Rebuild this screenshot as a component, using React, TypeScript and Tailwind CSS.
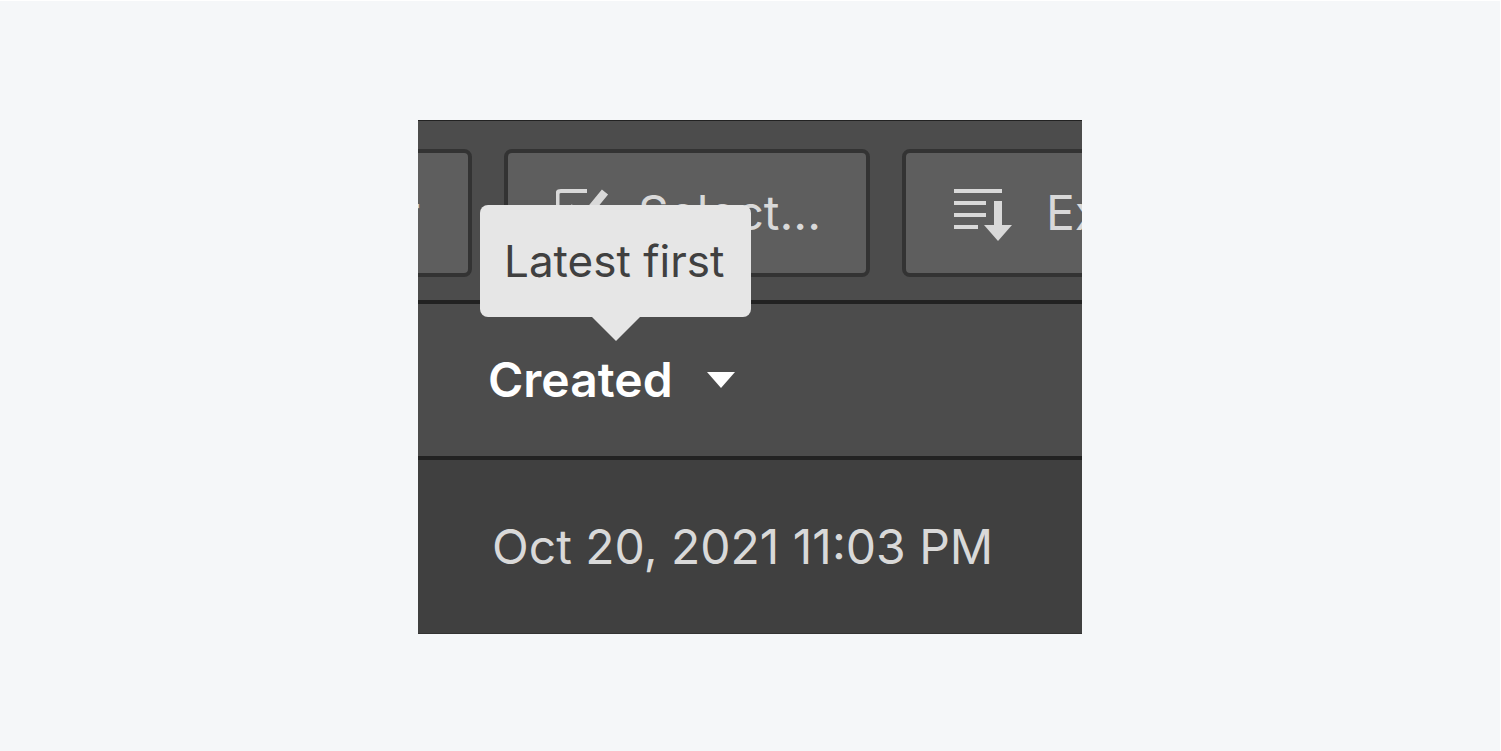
import type { ReactNode } from "react";

function ToolbarButton({ children, className }: { children: ReactNode; className: string }) {
  return (
    <button
      type="button"
      className={`flex h-32 shrink-0 items-center rounded-lg border-4 border-[#333333] bg-[#5e5e5e] px-12 text-5xl whitespace-nowrap text-[#d9d9d9] ${className}`}
    >
      {children}
    </button>
  );
}

function SelectIcon() {
  return (
    <svg className="h-14 w-14 shrink-0" viewBox="0 0 56 56" fill="none" stroke="#d9d9d9" aria-hidden="true">
      <path d="M31 6H5Q1.500 6 1.500 9V49Q1.500 52 5 52H44Q47 52 47 49V32" strokeWidth="4" />
      <path d="M13 22L26 35L49 7" strokeWidth="8" />
    </svg>
  );
}

function ExpandIcon() {
  return (
    <svg className="h-14 w-[60px] shrink-0" viewBox="0 0 60 56" fill="#d9d9d9" aria-hidden="true">
      <path d="M0 4H48V8H0zM0 16H32V20H0zM0 28H32V32H0zM0 40H24V44H0z" />
      <path d="M40 16H48V40H58L44 56L30 40H40z" />
    </svg>
  );
}

export default function App() {
  return (
    <main className="flex min-h-screen items-start justify-center border-t border-r border-white bg-[#f5f7f9] pt-[119px] font-['Inter',sans-serif]">
      <section className="w-full max-w-[664px] overflow-hidden border-t border-[#222222] bg-[#4c4c4c]">
        <div className="flex gap-8 border-b-4 border-[#222222] pt-7 pb-[23px]">
          <div className="flex w-[54px] shrink-0 justify-end">
            <ToolbarButton className="justify-end">Filter</ToolbarButton>
          </div>
          <ToolbarButton className="w-[366px] gap-[26px]">
            <SelectIcon />
            Select...
          </ToolbarButton>
          <ToolbarButton className="w-[366px] gap-8">
            <ExpandIcon />
            Export
          </ToolbarButton>
        </div>
        <table className="w-full border-separate border-spacing-0 text-left">
          <thead>
            <tr>
              <th scope="col" className="h-[156px] border-b-4 border-[#222222] px-[70px] align-middle">
                <div className="relative flex">
                  <button
                    type="button"
                    aria-describedby="sort-tip"
                    className="flex items-center gap-[34px] text-5xl font-semibold text-white"
                  >
                    Created
                    <svg className="h-4 w-7" viewBox="0 0 28 16" fill="white" aria-hidden="true">
                      <path d="M0 0H28L14 16z" />
                    </svg>
                  </button>
                  <div
                    id="sort-tip"
                    role="tooltip"
                    className="absolute bottom-full -left-2 mb-[15px] flex flex-col items-center"
                  >
                    <span className="min-w-[271px] rounded-lg bg-[#e6e6e6] px-6 py-7 text-[44px] leading-14 font-normal whitespace-nowrap text-[#404040]">
                      Latest first
                    </span>
                    <svg className="h-6 w-12" viewBox="0 0 48 24" fill="#e6e6e6" aria-hidden="true">
                      <path d="M0 0H48L24 24z" />
                    </svg>
                  </div>
                </div>
              </th>
            </tr>
          </thead>
          <tbody>
            <tr>
              <td className="h-[174px] border-b border-[#333333] bg-[#404040] px-[74px] text-5xl text-[#d9d9d9]">
                Oct 20, 2021 11:03 PM
              </td>
            </tr>
          </tbody>
        </table>
      </section>
    </main>
  );
}
